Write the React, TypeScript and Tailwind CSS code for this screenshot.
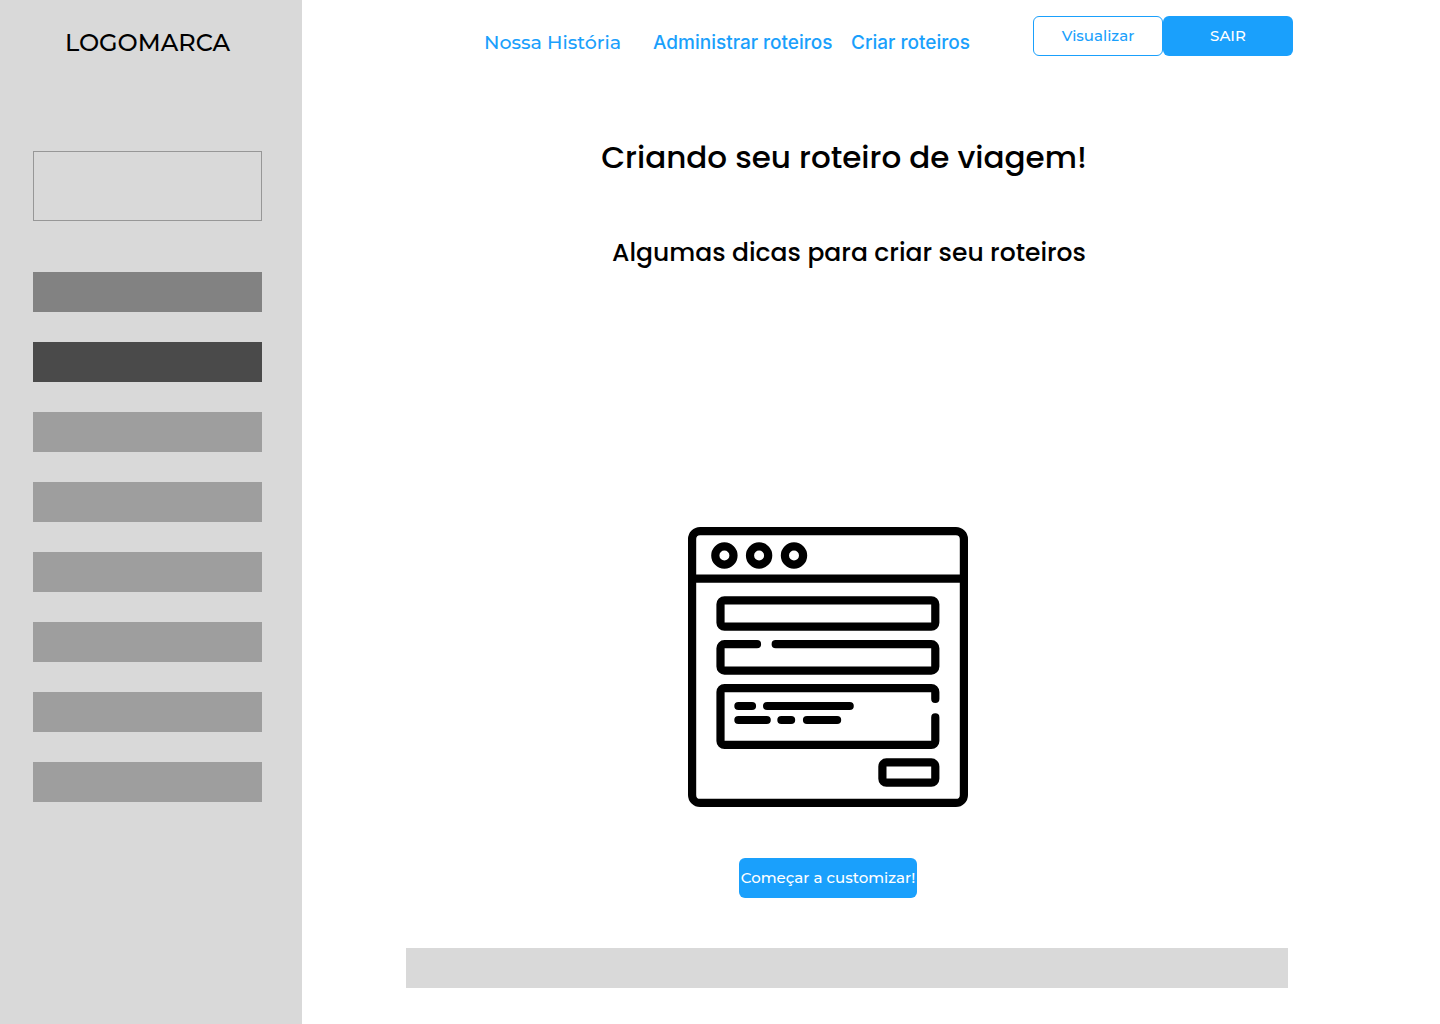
const menuBars = [
  'bg-[#828282]',
  'bg-[#4a4a4a]',
  'bg-[#9e9e9e]',
  'bg-[#9e9e9e]',
  'bg-[#9e9e9e]',
  'bg-[#9e9e9e]',
  'bg-[#9e9e9e]',
  'bg-[#9e9e9e]',
];

function Sidebar() {
  return (
    <aside className="w-[302px] shrink-0 bg-[#d9d9d9] pl-[33px] pr-10 pt-[25px]">
      <p className="text-center text-2xl font-medium leading-9">LOGOMARCA</p>
      <div className="mt-[90px] h-[70px] border border-[#979797]" />
      <ul className="mt-[51px] flex flex-col gap-[30px]">
        {menuBars.map((tone, index) => (
          <li key={index} className={`h-10 ${tone}`} />
        ))}
      </ul>
    </aside>
  );
}

function Header() {
  return (
    <header className="flex items-start justify-end pr-[147px] pt-4">
      <nav className="flex whitespace-nowrap pt-3 text-[19px] font-medium leading-[30px] text-[#1aa0fc]">
        <a href="#historia" className="w-[169px]">Nossa História</a>
        <a href="#administrar" className="w-[198px] font-['Inter',sans-serif]">Administrar roteiros</a>
        <a href="#criar" className="w-[182px] font-['Inter',sans-serif]">Criar roteiros</a>
      </nav>
      <button type="button" className="h-10 w-[130px] rounded-md border border-[#1aa0fc] bg-white text-[15px] font-medium text-[#1aa0fc]">
        Visualizar
      </button>
      <button type="button" className="h-10 w-[130px] rounded-md bg-[#1aa0fc] text-[15px] font-medium text-white">
        SAIR
      </button>
    </header>
  );
}

function FormIllustration() {
  return (
    <svg
      viewBox="0 0 280 280"
      className="size-[280px]"
      fill="none"
      stroke="#000"
      strokeWidth="8.2"
      strokeLinecap="round"
      aria-hidden="true"
    >
      <rect x="4.1" y="4.1" width="271.8" height="271.8" rx="8" />
      <path d="M4 51.6H276" />
      <circle cx="36.4" cy="28.5" r="9.1" />
      <circle cx="71.1" cy="28.5" r="9.1" />
      <circle cx="106" cy="28.5" r="9.1" />
      <rect x="32.5" y="73.3" width="214.8" height="26.4" rx="4" />
      <path d="M69 117.2H36.5a4 4 0 0 0-4 4v18.4a4 4 0 0 0 4 4h206.8a4 4 0 0 0 4-4v-18.4a4 4 0 0 0-4-4H87.7" />
      <path d="M247.3 172v-6.9a4 4 0 0 0-4-4H36.5a4 4 0 0 0-4 4v48.8a4 4 0 0 0 4 4h206.8a4 4 0 0 0 4-4v-23.5" />
      <path d="M50.4 179H64M79.1 179h82.6M50.4 193h28.3M93.4 193h9.7M119 193h30.1" />
      <rect x="194.4" y="235.4" width="52.9" height="20.3" rx="4" />
    </svg>
  );
}

export default function App() {
  return (
    <div className="flex min-h-screen bg-white font-['Montserrat','Inter',sans-serif] text-black">
      <Sidebar />
      <div className="flex min-w-0 flex-1 flex-col">
        <Header />
        <main className="flex flex-1 flex-col pb-9 pl-[104px] pr-[152px]">
          <h1 className="mt-[75px] pr-1.5 text-center font-['Poppins','Inter',sans-serif] text-[31px] font-medium leading-[48px]">
            Criando seu roteiro de viagem!
          </h1>
          <h2 className="mt-[52px] pl-1 text-center font-['Poppins','Inter',sans-serif] text-[25px] font-medium leading-10">
            Algumas dicas para criar seu roteiros
          </h2>
          <section className="mt-[254px] flex flex-col items-center pr-[38px]">
            <FormIllustration />
            <button type="button" className="mt-[51px] h-10 w-[178px] rounded-md bg-[#1aa0fc] text-[15px] font-medium text-white">
              Começar a customizar!
            </button>
          </section>
          <div className="mt-[50px] h-10 bg-[#d9d9d9]" />
        </main>
      </div>
    </div>
  );
}
